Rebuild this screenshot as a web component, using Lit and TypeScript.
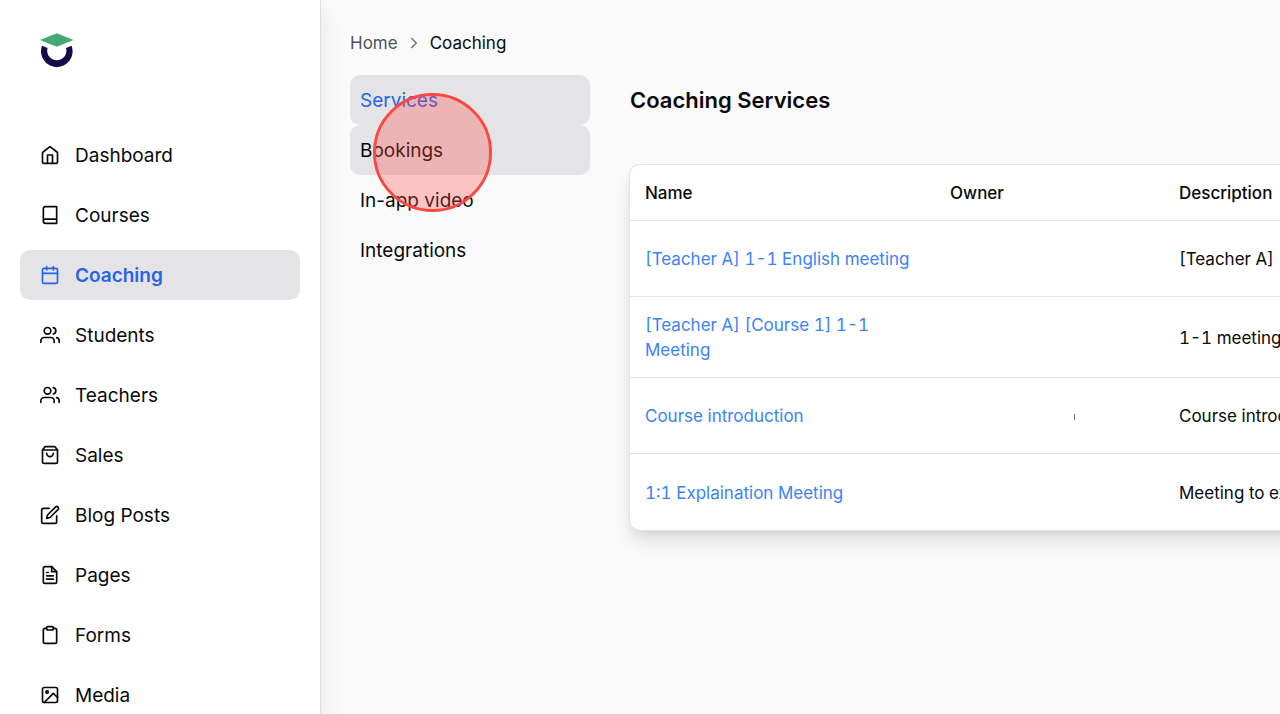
import { LitElement, html, css, svg, nothing } from "lit";
import { customElement, state } from "lit/decorators.js";
import { classMap } from "lit/directives/class-map.js";

const icons = {
  home: svg`<path d="m3 9 9-7 9 7v11a2 2 0 0 1-2 2H5a2 2 0 0 1-2-2z"/><path d="M9 22V12h6v10"/>`,
  book: svg`<path d="M4 19.5v-15A2.5 2.5 0 0 1 6.5 2H20v20H6.5a2.5 2.5 0 0 1 0-5H20"/>`,
  calendar: svg`<rect x="3" y="4" width="18" height="18" rx="2"/><path d="M16 2v4M8 2v4M3 10h18"/>`,
  users: svg`<path d="M17 21v-2a4 4 0 0 0-4-4H5a4 4 0 0 0-4 4v2"/><circle cx="9" cy="7" r="4"/><path d="M23 21v-2a4 4 0 0 0-3-3.87M16 3.13a4 4 0 0 1 0 7.75"/>`,
  bag: svg`<path d="M6 2 3 6v14a2 2 0 0 0 2 2h14a2 2 0 0 0 2-2V6l-3-4Z"/><path d="M3 6h18M16 10a4 4 0 0 1-8 0"/>`,
  edit: svg`<path d="M11 4H4a2 2 0 0 0-2 2v14a2 2 0 0 0 2 2h14a2 2 0 0 0 2-2v-7"/><path d="M18.5 2.5a2.12 2.12 0 0 1 3 3L12 15l-4 1 1-4Z"/>`,
  file: svg`<path d="M14 2H6a2 2 0 0 0-2 2v16a2 2 0 0 0 2 2h12a2 2 0 0 0 2-2V8z"/><path d="M14 2v6h6M16 13H8M16 17H8M10 9H8"/>`,
  clipboard: svg`<rect x="8" y="2" width="8" height="4" rx="1"/><path d="M16 4h2a2 2 0 0 1 2 2v14a2 2 0 0 1-2 2H6a2 2 0 0 1-2-2V6a2 2 0 0 1 2-2h2"/>`,
  image: svg`<rect x="3" y="3" width="18" height="18" rx="2"/><circle cx="8.5" cy="8.5" r="1.5"/><path d="m21 15-5-5L5 21"/>`,
};

const navItems: { label: string; icon: keyof typeof icons }[] = [
  { label: "Dashboard", icon: "home" },
  { label: "Courses", icon: "book" },
  { label: "Coaching", icon: "calendar" },
  { label: "Students", icon: "users" },
  { label: "Teachers", icon: "users" },
  { label: "Sales", icon: "bag" },
  { label: "Blog Posts", icon: "edit" },
  { label: "Pages", icon: "file" },
  { label: "Forms", icon: "clipboard" },
  { label: "Media", icon: "image" },
];

const tabs = ["Services", "Bookings", "In-app video", "Integrations"];

const services = [
  { name: "[Teacher A] 1-1 English meeting", description: "[Teacher A] 1-1 English meeting" },
  { name: "[Teacher A] [Course 1] 1-1 Meeting", description: "1-1 meeting" },
  { name: "Course introduction", description: "Course introduction", mark: true },
  { name: "1:1 Explaination Meeting", description: "Meeting to explain" },
];

@customElement("side-nav")
class SideNav extends LitElement {
  static styles = css`
    :host {
      display: block;
      box-sizing: border-box;
      width: 321px;
      flex: none;
      padding: 30px 20px 0;
      background: #fff;
      border-right: 1px solid #e0e0e3;
      box-shadow: 0 10px 24px rgba(0, 0, 0, 0.09);
      overflow: hidden;
    }
    .logo {
      display: block;
      width: 40px;
      height: 40px;
      margin: 0 0 60px 17px;
    }
    .list {
      display: flex;
      flex-direction: column;
      gap: 10px;
      margin: 0;
      padding: 0;
      list-style: none;
    }
    .item {
      display: flex;
      align-items: center;
      gap: 15px;
      height: 50px;
      padding: 0 20px;
      border-radius: 10px;
      color: #09090b;
      font-size: 19px;
      text-decoration: none;
    }
    .item.active {
      background: #e4e4e7;
      color: #2563eb;
      font-weight: 600;
    }
    .label {
      padding-top: 1px;
    }
    .icon {
      width: 20px;
      height: 20px;
      fill: none;
      stroke: currentColor;
      stroke-width: 2;
      stroke-linecap: round;
      stroke-linejoin: round;
    }
  `;

  render() {
    return html`
      <svg class="logo" viewBox="0 0 40 40" role="img" aria-label="Logo">
        <path d="M5 15.8A15.8 15.8 0 1 0 34.6 15.8L29 18A9.6 9.6 0 1 1 10.6 18Z" fill="#110b46" />
        <path d="M3 10 19.8 3.3 36.6 10 19.8 16.8Z" fill="#43a975" />
      </svg>
      <nav aria-label="Main">
        <ul class="list">
          ${navItems.map(
            (n) => html`<li>
              <a class=${classMap({ item: true, active: n.label === "Coaching" })} href="#">
                <svg class="icon" viewBox="0 0 24 24" aria-hidden="true">${icons[n.icon]}</svg>
                <span class="label">${n.label}</span>
              </a>
            </li>`
          )}
        </ul>
      </nav>
    `;
  }
}

@customElement("services-table")
class ServicesTable extends LitElement {
  static styles = css`
    :host {
      display: block;
    }
    .card {
      width: max-content;
      min-width: 100%;
      background: #fff;
      border-radius: 10px;
      box-shadow: 0 0 0 1px #e4e4e7, 0 12px 20px -2px rgba(0, 0, 0, 0.12), 0 4px 8px -2px rgba(0, 0, 0, 0.08);
    }
    .table {
      table-layout: fixed;
      width: 860px;
      border-collapse: separate;
      border-spacing: 0;
      font-size: 17px;
      line-height: 25px;
      font-variant-numeric: tabular-nums;
    }
    .name {
      width: 305px;
    }
    .owner {
      width: 229px;
    }
    .head {
      box-sizing: border-box;
      height: 56px;
      padding: 2px 15px 0;
      text-align: left;
      font-weight: 500;
      border-bottom: 1px solid #e4e4e7;
    }
    .cell {
      box-sizing: border-box;
      height: 76px;
      padding: 16px 15px 14px;
      border-bottom: 1px solid #e4e4e7;
    }
    .row:last-child .cell {
      border-bottom: 0;
    }
    .link {
      color: #3b82f6;
      text-decoration: none;
    }
    .mark {
      display: block;
      width: 1px;
      height: 6px;
      margin-left: 124px;
      background: #71717a;
    }
  `;

  render() {
    return html`<div class="card">
      <table class="table">
        <thead>
          <tr>
            <th class="head name" scope="col">Name</th>
            <th class="head owner" scope="col">Owner</th>
            <th class="head" scope="col">Description</th>
          </tr>
        </thead>
        <tbody>
          ${services.map(
            (s) => html`<tr class="row">
              <td class="cell"><a class="link" href="#">${s.name}</a></td>
              <td class="cell">${s.mark ? html`<span class="mark"></span>` : nothing}</td>
              <td class="cell">${s.description}</td>
            </tr>`
          )}
        </tbody>
      </table>
    </div>`;
  }
}

@customElement("app-root")
class AppRoot extends LitElement {
  static styles = css`
    :host {
      display: flex;
      height: 100vh;
      overflow: hidden;
      background: #fafafa;
      color: #09090b;
      font-family: Inter, "Liberation Sans", sans-serif;
    }
    .main {
      flex: 1;
      min-width: 0;
      padding: 30px 0 0 29px;
      overflow: hidden;
    }
    .crumbs {
      display: flex;
      align-items: center;
      gap: 10px;
      height: 25px;
      font-size: 17px;
    }
    .home {
      color: #52525b;
      text-decoration: none;
    }
    .chevron {
      width: 12px;
      height: 12px;
      fill: none;
      stroke: #71717a;
      stroke-width: 2;
      stroke-linecap: round;
      stroke-linejoin: round;
    }
    .columns {
      display: flex;
      gap: 40px;
      padding-top: 20px;
    }
    .tabs {
      flex: none;
      width: 240px;
    }
    .tab {
      display: flex;
      align-items: center;
      box-sizing: border-box;
      position: relative;
      height: 50px;
      padding: 1px 10px 0;
      border-radius: 10px;
      color: #09090b;
      font-size: 19px;
      text-decoration: none;
    }
    .tab.filled {
      background: #e4e4e7;
    }
    .tab.active {
      color: #2563eb;
    }
    .pointer {
      position: absolute;
      z-index: 1;
      left: 23px;
      top: -32px;
      box-sizing: border-box;
      width: 119px;
      height: 119px;
      border: 3px solid #ff4742;
      border-radius: 50%;
      background: rgba(255, 71, 66, 0.3);
      background-clip: padding-box;
      pointer-events: none;
    }
    .content {
      flex: 1;
      min-width: 0;
    }
    .title {
      margin: 0 0 40px;
      font-size: 22px;
      line-height: 50px;
      font-weight: 600;
    }
  `;

  @state() private hovered = "Bookings";

  render() {
    return html`
      <side-nav></side-nav>
      <main class="main">
        <nav class="crumbs" aria-label="Breadcrumb">
          <a class="home" href="#">Home</a>
          <svg class="chevron" viewBox="0 0 16 16" aria-hidden="true"><path d="m5 2 6 6-6 6" /></svg>
          <span aria-current="page">Coaching</span>
        </nav>
        <div class="columns">
          <nav class="tabs" aria-label="Coaching">
            ${tabs.map(
              (t) => html`<a
                class=${classMap({ tab: true, active: t === "Services", filled: t === "Services" || t === this.hovered })}
                href="#"
                >${t}${t === this.hovered ? html`<span class="pointer"></span>` : nothing}</a
              >`
            )}
          </nav>
          <section class="content">
            <h1 class="title">Coaching Services</h1>
            <services-table></services-table>
          </section>
        </div>
      </main>
    `;
  }
}
